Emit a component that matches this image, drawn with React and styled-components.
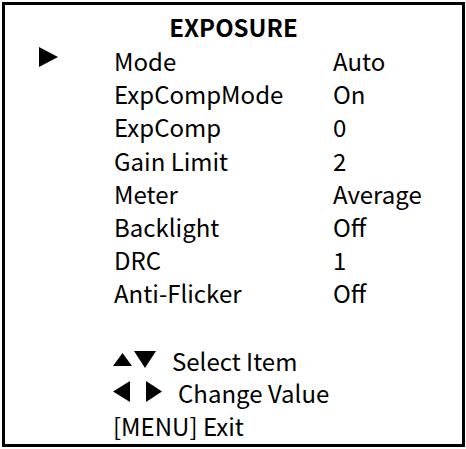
import React from 'react';
import styled, { createGlobalStyle } from 'styled-components';

const GlobalStyle = createGlobalStyle`
  html, body {
    margin: 0;
    padding: 0;
    background: #fff;
  }

  body {
    font-family: "Noto Sans CJK SC", "Noto Sans", sans-serif;
    color: #000;
  }
`;

const StyledPanel = styled.div`
  box-sizing: border-box;
  width: 463px;
  height: 445px;
  margin: 2px 0 0 2px;
  border: 3px solid #000;
  padding: 4px 0 0 0;
`;

const StyledTitle = styled.div`
  font-size: 24px;
  font-weight: 700;
  line-height: 35px;
  text-align: center;
`;

const StyledMenu = styled.div`
  display: grid;
  grid-template-columns: 76px 219px 1fr;
  grid-auto-rows: 33.2px;
  padding-left: 33px;
  font-size: 24px;
  line-height: 33px;
`;

const StyledMarker = styled.div`
  display: flex;
  align-items: flex-start;
  padding: 3px 0 0 1px;
`;

const StyledFooter = styled.div`
  display: flex;
  flex-direction: column;
  margin-top: 35px;
  padding-left: 108px;
  font-size: 24px;
  line-height: 32.5px;
`;

const StyledHint = styled.div`
  display: flex;
  align-items: center;
  gap: ${(p) => p.$gap}px;
`;

const StyledKeys = styled.span`
  display: flex;
  align-items: center;
  gap: ${(p) => p.$gap}px;
  padding-bottom: ${(p) => p.$lift}px;
`;

const Arrow = ({ dir, w, h }) => {
  const points = {
    right: `0,0 ${w},${h / 2} 0,${h}`,
    left: `${w},0 0,${h / 2} ${w},${h}`,
    up: `0,${h} ${w / 2},0 ${w},${h}`,
    down: `0,0 ${w},0 ${w / 2},${h}`,
  }[dir];
  return (
    <svg width={w} height={h} viewBox={`0 0 ${w} ${h}`}>
      <polygon points={points} fill="#000" />
    </svg>
  );
};

const items = [
  ['Mode', 'Auto'],
  ['ExpCompMode', 'On'],
  ['ExpComp', '0'],
  ['Gain Limit', '2'],
  ['Meter', 'Average'],
  ['Backlight', 'Off'],
  ['DRC', '1'],
  ['Anti-Flicker', 'Off'],
];

const App = () => (
  <>
    <GlobalStyle />
    <StyledPanel>
      <StyledTitle>EXPOSURE</StyledTitle>
      <StyledMenu>
        {items.map(([label, value], i) => (
          <React.Fragment key={label}>
            <StyledMarker>{i === 0 && <Arrow dir="right" w={19} h={20} />}</StyledMarker>
            <span>{label}</span>
            <span>{value}</span>
          </React.Fragment>
        ))}
      </StyledMenu>
      <StyledFooter>
        <StyledHint $gap={16}>
          <StyledKeys $gap={2} $lift={3}>
            <Arrow dir="up" w={19} h={13} />
            <Arrow dir="down" w={22} h={17} />
          </StyledKeys>
          <span>Select Item</span>
        </StyledHint>
        <StyledHint $gap={16}>
          <StyledKeys $gap={16} $lift={4}>
            <Arrow dir="left" w={17} h={21} />
            <Arrow dir="right" w={16} h={21} />
          </StyledKeys>
          <span>Change Value</span>
        </StyledHint>
        <StyledHint $gap={0}>
          <span>[MENU] Exit</span>
        </StyledHint>
      </StyledFooter>
    </StyledPanel>
  </>
);

export default App;
